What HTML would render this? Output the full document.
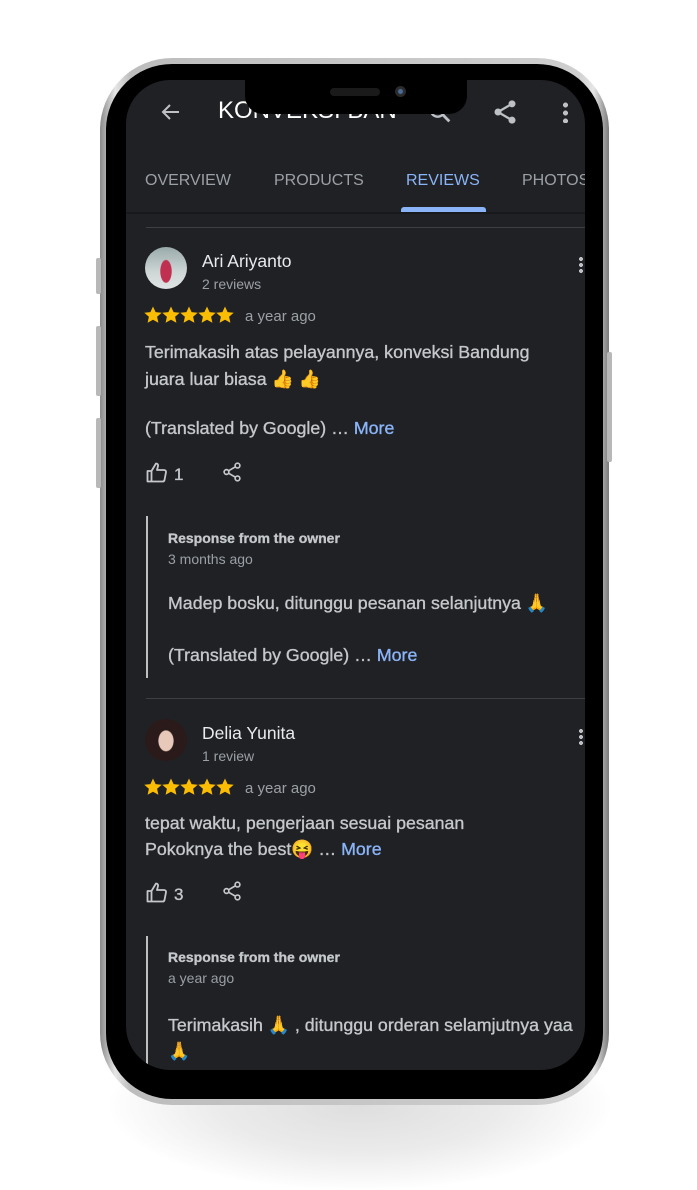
<!DOCTYPE html>
<html><head><meta charset="utf-8"><style>
*{margin:0;padding:0;box-sizing:border-box}
body{width:697px;height:1179px;background:#fff;position:relative;overflow:hidden;font-family:"Liberation Sans","Noto Sans CJK SC",sans-serif}
.shadow{position:absolute;left:110px;top:1020px;width:500px;height:170px;border-radius:50%;background:radial-gradient(ellipse at center,#dedede 0%,#ebebeb 40%,rgba(255,255,255,0) 72%)}
.frame{position:absolute;left:100px;top:58px;width:509px;height:1047px;border-radius:72px;background:linear-gradient(90deg,#8a8a8a,#e6e6e6 3%,#bdbdbd 6%,#cfcfcf 94%,#e6e6e6 97%,#7a7a7a)}
.black{position:absolute;left:106px;top:64px;width:497px;height:1035px;border-radius:66px;background:#000}
.screen{position:absolute;left:126px;top:80px;width:459px;height:990px;border-radius:44px;background:#202124;overflow:hidden}
.btn{position:absolute;background:#b8b8b8;width:5px;border-radius:2px}
.notch{position:absolute;left:245px;top:76px;width:222px;height:38px;background:#000;border-radius:0 0 18px 18px}
.t{position:absolute;white-space:nowrap}
.g{color:#c4c7cb;-webkit-text-stroke:0.35px #c4c7cb}
.w{color:#e8eaed}
.more{color:#8ab4f8;-webkit-text-stroke:0.35px #8ab4f8}
.ln{position:absolute;left:20px;width:439px;height:1px;background:#3c4043}
.bar{position:absolute;left:20px;width:2px;background:#c0c0c0}
.b{font-size:17.8px}
</style></head><body>
<div class="shadow"></div>
<div class="frame"></div>
<div class="btn" style="left:96px;top:258px;height:36px"></div>
<div class="btn" style="left:96px;top:326px;height:70px"></div>
<div class="btn" style="left:96px;top:418px;height:70px"></div>
<div class="btn" style="left:607px;top:352px;height:110px"></div>
<div class="black"></div>
<div class="screen">
 <svg class="t" style="left:33px;top:20px" width="24" height="24" viewBox="0 0 24 24"><path d="M20 12H5M11 5l-7 7 7 7" stroke="#bdc1c6" stroke-width="2" fill="none"/></svg>
 <div class="t" style="left:92px;top:17px;font-size:24px;color:#fff">KONVEKSI BAN</div>
 <svg class="t" style="left:300px;top:18px" width="28" height="28" viewBox="0 0 24 24"><circle cx="10" cy="10" r="6" stroke="#bdc1c6" stroke-width="2" fill="none"/><path d="M14.5 14.5L20 20" stroke="#bdc1c6" stroke-width="2.4"/></svg>
 <svg class="t" style="left:365px;top:18px" width="28" height="28" viewBox="0 0 24 24"><circle cx="18" cy="5" r="3" fill="#bdc1c6"/><circle cx="6" cy="12" r="3" fill="#bdc1c6"/><circle cx="18" cy="19" r="3" fill="#bdc1c6"/><path d="M18 5L6 12l12 7" stroke="#bdc1c6" stroke-width="2" fill="none"/></svg>
 <div class="t" style="left:437px;top:21px;width:5px;height:22px;background:radial-gradient(circle,#bdc1c6 2.4px,transparent 2.6px) 0 0/5px 8px"></div>
 <div class="t" style="left:19px;top:92px;font-size:16px;color:#9aa0a6">OVERVIEW</div>
 <div class="t" style="left:148px;top:92px;font-size:16px;color:#9aa0a6">PRODUCTS</div>
 <div class="t" style="left:280px;top:92px;font-size:16px;color:#8ab4f8">REVIEWS</div>
 <div class="t" style="left:396px;top:92px;font-size:16px;color:#9aa0a6">PHOTOS</div>
 <div class="t" style="left:275px;top:127px;width:85px;height:5px;background:#8ab4f8;border-radius:3px 3px 0 0"></div>
 <div class="t" style="left:0;top:132px;width:459px;height:2px;background:#18191b"></div>
 <div class="ln" style="top:147px"></div>

 <div class="t" style="left:19px;top:167px;width:42px;height:42px;border-radius:50%;background:radial-gradient(ellipse 6px 12px at 50% 58%,#c03050 0 90%,transparent 100%),linear-gradient(#9aa 0,#cfd6d6 60%,#e0e4e4)"></div>
 <div class="t w" style="left:76px;top:171px;font-size:17.5px">Ari Ariyanto</div>
 <div class="t" style="left:76px;top:196px;font-size:14px;color:#9aa0a6">2 reviews</div>
 <div class="t" style="left:453px;top:176px;width:4px;height:18px;background:radial-gradient(circle,#bdc1c6 1.9px,transparent 2.1px) 0 0/4px 6px"></div>
 <svg class="t" style="left:18px;top:226px" width="92" height="18" viewBox="0 0 92 18"><g fill="#fbbc04"><path id="s" d="M9 0.5l2.6 5.6 6.1 .6-4.6 4.1 1.3 6-5.4-3.1-5.4 3.1 1.3-6-4.6-4.1 6.1-.6z"/><use href="#s" x="18"/><use href="#s" x="36"/><use href="#s" x="54"/><use href="#s" x="72"/></g></svg>
 <div class="t" style="left:119px;top:228px;font-size:15px;color:#9aa0a6">a year ago</div>
 <div class="t g b" style="left:19px;top:259px;line-height:27px">Terimakasih atas pelayannya, konveksi Bandung<br>juara luar biasa 👍 👍</div>
 <div class="t g b" style="left:19px;top:338px">(Translated by Google) … <span class="more">More</span></div>
 <svg class="t" style="left:20px;top:382px" width="22" height="21" viewBox="0 0 22 21"><path d="M1.5 9h4v10.5h-4zM5.5 9l4.5-7.5c1.5 0 2.3 1 2 2.5L11 8h7c1.3 0 2.2 1 2 2.2l-1.5 7.8c-.2.9-1 1.5-1.9 1.5H5.5" stroke="#c4c7cb" stroke-width="1.8" fill="none" stroke-linejoin="round"/></svg>
 <div class="t g" style="left:48px;top:385px;font-size:17px">1</div>
 <svg class="t" style="left:95px;top:380px" width="22" height="24" viewBox="0 0 24 24"><circle cx="18" cy="5" r="2.6" fill="none" stroke="#c4c7cb" stroke-width="1.8"/><circle cx="6" cy="12" r="2.6" fill="none" stroke="#c4c7cb" stroke-width="1.8"/><circle cx="18" cy="19" r="2.6" fill="none" stroke="#c4c7cb" stroke-width="1.8"/><path d="M15.8 6.3l-7.6 4.4M8.2 13.3l7.6 4.4" stroke="#c4c7cb" stroke-width="1.8"/></svg>
 <div class="bar" style="top:436px;height:162px"></div>
 <div class="t g" style="left:42px;top:450px;font-size:14px;font-weight:bold">Response from the owner</div>
 <div class="t" style="left:42px;top:471px;font-size:14px;color:#9aa0a6">3 months ago</div>
 <div class="t g b" style="left:42px;top:513px">Madep bosku, ditunggu pesanan selanjutnya 🙏</div>
 <div class="t g b" style="left:42px;top:565px">(Translated by Google) … <span class="more">More</span></div>
 <div class="ln" style="top:618px"></div>

 <div class="t" style="left:19px;top:639px;width:42px;height:42px;border-radius:50%;background:radial-gradient(ellipse 8px 11px at 50% 52%,#e8c8b8 0 90%,transparent 100%),#2a1a1a"></div>
 <div class="t w" style="left:76px;top:643px;font-size:17.5px">Delia Yunita</div>
 <div class="t" style="left:76px;top:668px;font-size:14px;color:#9aa0a6">1 review</div>
 <div class="t" style="left:453px;top:648px;width:4px;height:18px;background:radial-gradient(circle,#bdc1c6 1.9px,transparent 2.1px) 0 0/4px 6px"></div>
 <svg class="t" style="left:18px;top:698px" width="92" height="18" viewBox="0 0 92 18"><g fill="#fbbc04"><use href="#s"/><use href="#s" x="18"/><use href="#s" x="36"/><use href="#s" x="54"/><use href="#s" x="72"/></g></svg>
 <div class="t" style="left:119px;top:700px;font-size:15px;color:#9aa0a6">a year ago</div>
 <div class="t g b" style="left:19px;top:730px;line-height:26px">tepat waktu, pengerjaan sesuai pesanan<br>Pokoknya the best😝 … <span class="more">More</span></div>
 <svg class="t" style="left:20px;top:802px" width="22" height="21" viewBox="0 0 22 21"><path d="M1.5 9h4v10.5h-4zM5.5 9l4.5-7.5c1.5 0 2.3 1 2 2.5L11 8h7c1.3 0 2.2 1 2 2.2l-1.5 7.8c-.2.9-1 1.5-1.9 1.5H5.5" stroke="#c4c7cb" stroke-width="1.8" fill="none" stroke-linejoin="round"/></svg>
 <div class="t g" style="left:48px;top:805px;font-size:17px">3</div>
 <svg class="t" style="left:95px;top:799px" width="22" height="24" viewBox="0 0 24 24"><circle cx="18" cy="5" r="2.6" fill="none" stroke="#c4c7cb" stroke-width="1.8"/><circle cx="6" cy="12" r="2.6" fill="none" stroke="#c4c7cb" stroke-width="1.8"/><circle cx="18" cy="19" r="2.6" fill="none" stroke="#c4c7cb" stroke-width="1.8"/><path d="M15.8 6.3l-7.6 4.4M8.2 13.3l7.6 4.4" stroke="#c4c7cb" stroke-width="1.8"/></svg>
 <div class="bar" style="top:856px;height:140px"></div>
 <div class="t g" style="left:42px;top:869px;font-size:14px;font-weight:bold">Response from the owner</div>
 <div class="t" style="left:42px;top:890px;font-size:14px;color:#9aa0a6">a year ago</div>
 <div class="t g b" style="left:42px;top:932px;line-height:26px">Terimakasih 🙏 , ditunggu orderan selamjutnya yaa<br>🙏</div>
</div>
<div class="notch"></div>
<div class="t" style="left:330px;top:88px;width:50px;height:8px;border-radius:4px;background:#1a1a1a"></div>
<div class="t" style="left:395px;top:86px;width:11px;height:11px;border-radius:50%;background:radial-gradient(circle,#4a6a9a 0 2px,#2a2a2a 3px)"></div>
</body></html>
